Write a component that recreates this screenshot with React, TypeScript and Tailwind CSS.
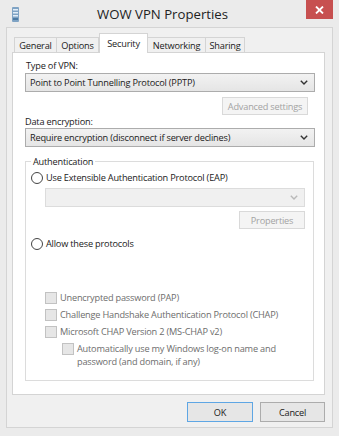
const font = { fontFamily: '"Open Sans", "Noto Sans", sans-serif' }

function Chevron({ disabled }: { disabled?: boolean }) {
  return (
    <svg width="8" height="5" viewBox="0 0 8 5" className="shrink-0">
      <path
        d="M0.8 0.8 L4 4 L7.2 0.8"
        fill="none"
        stroke={disabled ? '#b8b8b8' : '#333'}
        strokeWidth="1.4"
      />
    </svg>
  )
}

function Select({ value }: { value: string }) {
  return (
    <div className="flex h-[19px] items-center justify-between border border-[#acacac] bg-[linear-gradient(#f2f2f2,#e5e5e5)] pl-[4px] pr-[6px] text-[#1a1a1a]">
      <span>{value}</span>
      <Chevron />
    </div>
  )
}

function DisabledButton({ label, w }: { label: string; w: string }) {
  return (
    <div
      className={`flex h-[18px] ${w} items-center justify-center border border-[#d9d9d9] bg-[#f4f4f4] text-[#a3a3a3]`}
    >
      {label}
    </div>
  )
}

function Radio({ label }: { label: string }) {
  return (
    <div className="flex items-center gap-[3px]">
      <span className="h-[12px] w-[12px] rounded-full border border-[#444] bg-white" />
      <span className="text-[#1a1a1a]">{label}</span>
    </div>
  )
}

function Check({ label }: { label: string }) {
  return (
    <div className="flex items-start gap-[3px]">
      <span className="mt-[1px] h-[12px] w-[12px] shrink-0 border border-[#c2c2c2] bg-[#e6e6e6]" />
      <span className="text-[#6d6d6d]">{label}</span>
    </div>
  )
}

export default function App() {
  const tabs = [
    { t: 'General', w: 'w-[43px]' },
    { t: 'Options', w: 'w-[42px]' },
    { t: 'Security', w: 'w-[49px]' },
    { t: 'Networking', w: 'w-[58px]' },
    { t: 'Sharing', w: 'w-[39px]' },
  ]

  return (
    <div
      className="flex h-[436px] w-[339px] flex-col bg-[#ebebeb] text-[9.2px] leading-[13px] tracking-[-0.2px]"
      style={font}
    >
      {/* title bar */}
      <div className="relative flex h-[27px] shrink-0 items-start">
        <svg width="7" height="15" viewBox="0 0 7 15" className="ml-[12px] mt-[7px]">
          <rect x="0" y="0" width="7" height="15" rx="1" fill="#7fa3c4" />
          <rect x="1" y="2" width="5" height="1.5" fill="#e3eef8" />
          <rect x="1" y="5" width="5" height="1.5" fill="#e3eef8" />
          <rect x="1" y="8" width="5" height="1.5" fill="#e3eef8" />
          <rect x="1" y="11" width="5" height="2" fill="#4c7aa3" />
        </svg>
        <div className="flex-1 pt-[4px] text-center text-[13.2px] leading-[20px] tracking-normal text-[#222]">
          WOW VPN Properties
        </div>
        <div className="mr-[6px] flex h-[19px] w-[27px] items-center justify-center bg-[#c75050]">
          <svg width="9" height="8" viewBox="0 0 9 8">
            <path d="M1 0.5 L8 7.5 M8 0.5 L1 7.5" stroke="#fff" strokeWidth="1.8" />
          </svg>
        </div>
      </div>

      {/* client area */}
      <div className="mx-[6px] mb-[8px] flex flex-1 flex-col border border-[#d4d4d4] bg-[#f0f0f0] pl-[5px] pr-[7px]">
        <div className="mt-[5px] flex h-[19px] items-end pl-[2px]">
          {tabs.map(({ t, w }) => {
            const active = t === 'Security'
            return active ? (
              <div
                key={t}
                className={`relative z-10 -mb-px flex h-[20px] ${w} items-start justify-center border border-b-0 border-[#d4d4d4] bg-white pt-[3px] text-[#1a1a1a]`}
              >
                {t}
              </div>
            ) : (
              <div
                key={t}
                className={`flex h-[15px] ${w} items-center justify-center border border-b-0 border-l-0 border-[#d4d4d4] bg-[#f0f0f0] text-[#1a1a1a] first:border-l`}
              >
                {t}
              </div>
            )
          })}
        </div>

        <div className="flex h-[343px] flex-col border border-[#d4d4d4] bg-white pl-[12px] pr-[9px] pt-[6px]">
          <div className="pl-[1px] text-[#1a1a1a]">Type of VPN:</div>
          <div className="mt-px">
            <Select value="Point to Point Tunnelling Protocol (PPTP)" />
          </div>
          <div className="mt-[5px] flex justify-end pr-[7px]">
            <DisabledButton label="Advanced settings" w="w-[86px]" />
          </div>
          <div className="text-[#1a1a1a]">Data encryption:</div>
          <div>
            <Select value="Require encryption (disconnect if server declines)" />
          </div>

          <div className="relative mt-[14px] mr-px h-[220px] border border-[#dcdcdc] px-[5px] pt-[9px]">
            <span className="absolute -top-[7px] left-[5px] bg-white px-[2px] text-[#1a1a1a]">
              Authentication
            </span>
            <Radio label="Use Extensible Authentication Protocol (EAP)" />
            <div className="ml-[14px] mt-[4px] mr-[3px] flex h-[19px] items-center justify-end border border-[#dcdcdc] bg-[#f0f0f0] pr-[6px]">
              <Chevron disabled />
            </div>
            <div className="mt-[4px] mr-[3px] flex justify-end">
              <DisabledButton label="Properties" w="w-[66px]" />
            </div>
            <div className="mt-[8px]">
              <Radio label="Allow these protocols" />
            </div>
            <div className="ml-[14px] mt-[41px] flex flex-col gap-[4px]">
              <Check label="Unencrypted password (PAP)" />
              <Check label="Challenge Handshake Authentication Protocol (CHAP)" />
              <Check label="Microsoft CHAP Version 2 (MS-CHAP v2)" />
              <div className="ml-[17px]">
                <Check label="Automatically use my Windows log-on name and password (and domain, if any)" />
              </div>
            </div>
          </div>
        </div>

        <div className="mt-[7px] flex justify-end gap-[7px]">
          <button className="h-[20px] w-[66px] border border-[#5ea6e4] bg-[#e6e6e6] text-[#1a1a1a]">
            OK
          </button>
          <button className="h-[20px] w-[65px] border border-[#acacac] bg-[#e6e6e6] text-[#1a1a1a]">
            Cancel
          </button>
        </div>
      </div>
    </div>
  )
}
